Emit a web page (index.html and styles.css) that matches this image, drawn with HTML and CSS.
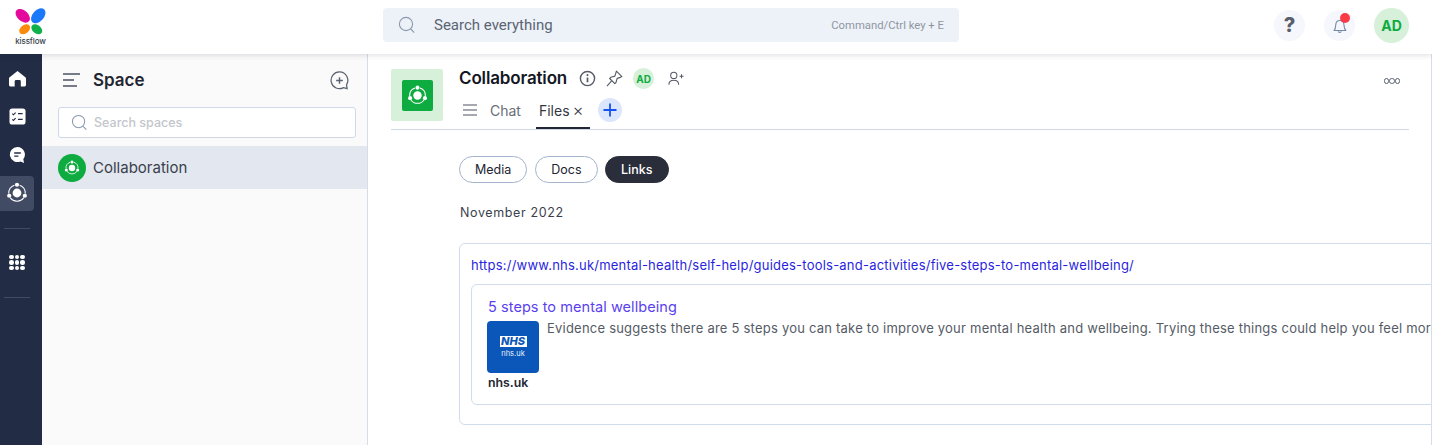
FILE: index.html
```html
<!DOCTYPE html>
<html lang="en">
<head>
<meta charset="utf-8">
<title>Kissflow - Collaboration</title>
<link rel="stylesheet" href="styles.css">
</head>
<body>
<svg class="defs" width="0" height="0" aria-hidden="true">
  <symbol id="spaces" viewBox="0 0 24 24">
    <circle cx="12" cy="12" r="4.800" fill="currentColor"/>
    <path d="M14.800 3.450A9 9 0 0 1 20.970 12.700M9.200 3.450A9 9 0 0 0 3.030 12.700M19.400 17.080A9 9 0 0 1 4.600 17.080" fill="none" stroke="currentColor" stroke-width="1.200"/>
    <circle cx="12" cy="3" r="2.300" fill="currentColor"/>
    <circle cx="3.500" cy="15" r="2.300" fill="currentColor"/>
    <circle cx="20.500" cy="15" r="2.300" fill="currentColor"/>
  </symbol>
</svg>
<div class="app">
  <header class="topbar">
    <div class="brand">
      <div class="logo">
        <svg class="logo-mark" viewBox="0 0 32 28" width="31" height="28">
          <ellipse cx="8" cy="7.600" rx="8.600" ry="5.600" transform="rotate(42 8 7.600)" fill="#e5089c"/>
          <ellipse cx="24" cy="7.600" rx="9" ry="5.800" transform="rotate(-48 24 7.600)" fill="#1a78fa"/>
          <ellipse cx="10" cy="21.500" rx="6.200" ry="4.400" transform="rotate(-38 10 21.500)" fill="#fb8b0c"/>
          <ellipse cx="22.500" cy="21.500" rx="6.200" ry="4.400" transform="rotate(38 22.500 21.500)" fill="#10b04a"/>
        </svg>
        <span class="logo-text">kissflow</span>
      </div>
    </div>
    <div class="global-search">
      <svg class="i-search" viewBox="0 0 18 18" width="18" height="18"><circle cx="8" cy="8" r="6.600" fill="none" stroke="#8b99ae" stroke-width="1.100"/><path d="M12.800 13l3.400 3.600" stroke="#8b99ae" stroke-width="1.100"/></svg>
      <span class="gs-text">Search everything</span>
      <span class="gs-hint">Command/Ctrl key + E</span>
    </div>
    <div class="actions">
      <span class="round help">?</span>
      <span class="round bell">
        <svg viewBox="0 0 20 22" width="18" height="21"><path d="M3.500 16.500c1.400-1.600 1.600-3 1.700-5.500C5.300 7.600 7 5.500 9.800 5.500s4.600 2.100 4.700 5.500c.1 2.500.5 3.900 2 5.500zM8 17.500c.3 1.500 3.100 1.500 3.500 0" fill="none" stroke="#7488a8" stroke-width="1.200" stroke-linejoin="round"/></svg>
        <i class="dot"></i>
      </span>
      <span class="avatar avatar-lg">AD</span>
    </div>
  </header>
  <div class="body">
    <nav class="rail">
      <span class="rail-item">
        <svg viewBox="0 0 18 18" width="17" height="17"><path fill-rule="evenodd" d="M9 1l8.300 6.800c.4.300.7.800.7 1.300V16a1.500 1.500 0 0 1-1.500 1.500h-4V12a1.500 1.500 0 0 0-1.500-1.500H7.500A1.500 1.500 0 0 0 6 12v5.500H1.500A1.500 1.500 0 0 1 0 16V9.100c0-.5.300-1 .7-1.300z" fill="#fff"/></svg>
      </span>
      <span class="rail-item">
        <svg viewBox="0 0 18 18" width="17" height="17"><rect width="17" height="17" x=".5" y=".5" rx="3" fill="#fff"/><path d="M3.500 6l1.200 1.200L7 4.800M3.500 12l1.200 1.200L7 10.800M9.500 6h5M9.500 12h5" fill="none" stroke="#222c44" stroke-width="1.200"/></svg>
      </span>
      <span class="rail-item">
        <svg viewBox="0 0 18 18" width="17" height="18"><path d="M9 .5a8 8 0 1 0 3.200 15.300L16 17.500l-.9-4.100A8 8 0 0 0 9 .5z" fill="#fff"/><path d="M5.500 6.800h7M5.500 10.200h4.500" stroke="#222c44" stroke-width="1.500"/></svg>
      </span>
      <span class="rail-item active">
        <svg class="spaces-icon" width="22" height="22"><use href="#spaces"/></svg>
      </span>
      <hr class="rail-rule rule-top">
      <span class="rail-grid">
        <i></i><i></i><i></i><i></i><i></i><i></i><i></i><i></i><i></i>
      </span>
      <hr class="rail-rule rule-bottom">
    </nav>
    <aside class="sidebar">
      <div class="side-head">
        <svg viewBox="0 0 18 14" width="18" height="14"><path d="M0 1h17M0 7h11M0 13h14" stroke="#4b5262" stroke-width="1.500"/></svg>
        <h2 class="side-title">Space</h2>
        <svg class="side-add" viewBox="0 0 20 20" width="19" height="19"><path d="M10 1a8.800 8.800 0 1 0 4.200 16.500l3.800 1-.6-4A8.800 8.800 0 0 0 10 1z" fill="none" stroke="#5a6270" stroke-width="1.300"/><path d="M10 6.500v7M6.500 10h7" stroke="#5a6270" stroke-width="1.500"/></svg>
      </div>
      <div class="side-search">
        <svg viewBox="0 0 18 18" width="17" height="17"><circle cx="8" cy="8" r="6.500" fill="none" stroke="#8b99ae" stroke-width="1.100"/><path d="M12.800 13l3.400 3.600" stroke="#8b99ae" stroke-width="1.100"/></svg>
        <span>Search spaces</span>
      </div>
      <div class="side-row">
        <span class="side-row-icon"><svg class="spaces-icon" width="16" height="16"><use href="#spaces"/></svg></span>
        <span class="side-row-text">Collaboration</span>
      </div>
    </aside>
    <main class="main">
      <section class="space-head">
        <span class="tile"><span class="tile-inner"><svg class="spaces-icon" width="21" height="21"><use href="#spaces"/></svg></span></span>
        <div class="head-col">
          <div class="title-row">
            <h1 class="title">Collaboration</h1>
            <svg class="t-info" viewBox="0 0 18 18" width="17" height="17"><circle cx="9" cy="9" r="7.500" fill="none" stroke="#555b66" stroke-width="1.500"/><path d="M9 8v5" stroke="#555b66" stroke-width="1.800"/><circle cx="9" cy="5.400" r="1.100" fill="#555b66"/></svg>
            <svg class="t-pin" viewBox="0 0 18 18" width="17" height="17"><path d="M11 1.200l5.800 5.800-1.500.8-3.500 1.100-1.200 4.300-1.300 1.200-5.400-5.400 1.200-1.300 4.300-1.200 1.100-3.500zM5.700 11.800L1 17" fill="none" stroke="#555b66" stroke-width="1.200" stroke-linejoin="round"/></svg>
            <span class="avatar avatar-sm">AD</span>
            <svg class="t-user" viewBox="0 0 18 16" width="16" height="15"><circle cx="6.500" cy="4.500" r="3.500" fill="none" stroke="#555b66" stroke-width="1.200"/><path d="M1 15c0-3.200 2.400-5 5.500-5s5.500 1.800 5.500 5M13 5.500h4.500M15.200 3.300v4.400" fill="none" stroke="#555b66" stroke-width="1.200"/></svg>
            <span class="more"><i></i><i></i><i></i></span>
          </div>
          <div class="tabs-row">
            <svg class="t-menu" viewBox="0 0 14 12" width="14" height="12"><path d="M0 1h14M0 6h14M0 11h14" stroke="#888c94" stroke-width="1.300"/></svg>
            <span class="tab">Chat</span>
            <span class="tab tab-active">Files<span class="tab-x">×</span></span>
            <span class="tab-add"><svg viewBox="0 0 14 14" width="14" height="14"><path d="M7 .5v13M.5 7h13" stroke="#1553f0" stroke-width="1.800"/></svg></span>
          </div>
        </div>
      </section>
      <section class="content">
        <div class="pills">
          <span class="pill">Media</span>
          <span class="pill">Docs</span>
          <span class="pill pill-on">Links</span>
        </div>
        <p class="month">November 2022</p>
        <article class="link-card">
          <a class="url" href="#">https://www.nhs.uk/mental-health/self-help/guides-tools-and-activities/five-steps-to-mental-wellbeing/</a>
          <div class="preview">
            <div class="preview-title">5 steps to mental wellbeing</div>
            <div class="preview-body">
              <div class="thumb-col">
                <div class="thumb"><span class="nhs-mark">NHS</span><span class="nhs-site">nhs.uk</span></div>
                <div class="site">nhs.uk</div>
              </div>
              <p class="desc">Evidence suggests there are 5 steps you can take to improve your mental health and wellbeing. Trying these things could help you feel more</p>
            </div>
          </div>
        </article>
      </section>
    </main>
  </div>
</div>
</body>
</html>
```
FILE: styles.css
```css
* { box-sizing: border-box; }
html, body { margin: 0; height: 100%; overflow: hidden; }
body { font-family: Inter, "Liberation Sans", sans-serif; color: #222632; background: #fff; }
.defs { position: absolute; }
.app { height: 445px; display: flex; flex-direction: column; }

.topbar { height: 54px; flex: none; display: flex; align-items: center; padding-bottom: 4px; background: #fff; box-shadow: 0 1px 6px rgba(30, 40, 60, .16); position: relative; z-index: 2; }
.brand { width: 383px; flex: none; padding-left: 15px; }
.logo { width: 31px; display: flex; flex-direction: column; align-items: center; padding-top: 4px; }
.logo-mark { display: block; }
.logo-text { font-size: 8px; line-height: 10px; color: #3a3f4a; font-weight: 500; letter-spacing: -.1px; }
.global-search { width: 576px; height: 34px; flex: none; display: flex; align-items: center; background: #edf2f9; border-radius: 4px; padding: 0 15px; }
.gs-text { font-family: Roboto, sans-serif; font-size: 15px; color: #5b6472; margin-left: 18px; flex: 1; }
.gs-hint { font-family: Roboto, sans-serif; font-size: 11.300px; color: #8f96a2; }
.actions { flex: 1; display: flex; align-items: center; padding-left: 315px; }
.round { width: 31px; height: 31px; border-radius: 50%; background: #f5f7fc; display: flex; align-items: center; justify-content: center; position: relative; }
.help { font-size: 20px; font-weight: 800; color: #5a5f6b; }
.bell { margin-left: 19px; }
.dot { position: absolute; width: 10px; height: 10px; border-radius: 50%; background: #fb3a48; top: 3px; right: 5px; }
.avatar { border-radius: 50%; background: #d6f0d9; color: #0dab40; font-weight: 700; display: flex; align-items: center; justify-content: center; flex: none; }
.avatar-lg { width: 35px; height: 35px; font-size: 14px; margin-left: 19px; }
.avatar-sm { width: 21px; height: 21px; font-size: 10px; margin-left: 10px; }

.body { flex: 1; display: flex; min-height: 0; }
.rail { width: 42px; flex: none; background: #222c44; display: flex; flex-direction: column; align-items: flex-start; padding-top: 7px; }
.rail-item { width: 34px; height: 35px; margin-bottom: 3.330px; display: flex; align-items: center; justify-content: center; color: #fff; border-radius: 0 4px 4px 0; }
.rail-item.active { background: #414b63; margin-bottom: 0; }
.rail-rule { width: 26px; height: 1px; border: 0; background: #414b63; margin: 0 0 0 4px; flex: none; }
.rule-top { margin-top: 17px; }
.rail-grid { display: grid; grid-template-columns: repeat(3, 4.500px); grid-auto-rows: 4.500px; gap: 1px; margin: 26px 0 0 9px; }
.rail-grid i { width: 4.500px; height: 4.500px; background: #fff; border-radius: 50%; }
.rule-bottom { margin-top: 27px; }

.sidebar { width: 326px; flex: none; background: #fafafa; border-right: 1px solid #d5dde9; padding-top: 14px; }
.side-head { display: flex; align-items: center; height: 24px; padding: 0 18px 0 21px; }
.side-title { margin: 0 0 0 12px; font-size: 17px; font-weight: 600; line-height: 22px; color: #222632; flex: 1; }
.side-search { margin: 15px 11px 0 16px; height: 31px; background: #fff; border: 1px solid #cfd8e8; border-radius: 3px; display: flex; align-items: center; padding-left: 12px; gap: 6px; font-size: 12.500px; font-weight: 500; color: #c3c6cc; }
.side-row { margin-top: 8px; height: 43px; background: #e3e7ef; display: flex; align-items: center; padding-left: 16px; }
.side-row-icon { width: 28px; height: 28px; border-radius: 50%; background: #0dab40; display: flex; align-items: center; justify-content: center; }
.spaces-icon { display: block; color: #fff; }
.side-row-text { margin-left: 7px; font-size: 15px; color: #3a3f4c; }

.main { flex: 1; min-width: 0; overflow: hidden; background: #fff; border-right: 1px solid #d5dde9; padding: 15px 22px 0 23px; }
.space-head { display: flex; align-items: flex-start; border-bottom: 1px solid #cfd8e8; height: 61px; }
.tile { width: 52px; height: 52px; flex: none; background: #d6f0d9; border-radius: 2px; display: flex; align-items: center; justify-content: center; }
.tile-inner { width: 31px; height: 31px; background: #0dab40; border-radius: 2px; display: flex; align-items: center; justify-content: center; }
.head-col { flex: 1; margin-left: 16px; }
.title-row { display: flex; align-items: center; height: 21px; margin-top: -1px; }
.title { margin: 0; font-size: 17px; font-weight: 600; line-height: 20px; color: #14171f; position: relative; top: -1px; letter-spacing: -.15px; }
.t-info { margin-left: 12px; }
.t-pin { margin-left: 10px; }
.t-user { margin-left: 14px; }
.more { margin-left: auto; margin-right: 9px; display: flex; margin-top: 5px; }
.more i { width: 5.500px; height: 5.500px; border: 1.200px solid #5a6270; border-radius: 50%; }
.tabs-row { display: flex; align-items: center; height: 41px; padding-left: 4px; }
.tab { font-size: 14px; color: #686d78; margin-left: 13px; height: 39px; display: flex; align-items: center; padding-top: 1px; }
.tab-active { color: #33373f; margin-left: 15px; padding: 3px 3px 0; border-bottom: 2px solid #222632; height: 39px; gap: 3px; width: 54px; flex: none; }
.tab-x { font-size: 17px; line-height: 14px; color: #3a3f4c; font-weight: 300; }
.tab-add { width: 24px; height: 24px; border-radius: 50%; background: #dbe6fd; margin-left: 8px; display: flex; align-items: center; justify-content: center; }

.content { padding-left: 68px; }
.pills { display: flex; gap: 8px; margin-top: 26px; }
.pill { height: 27px; padding: 0 15px; border: 1px solid #a4b4cc; border-radius: 14px; font-size: 12.500px; color: #222632; display: flex; align-items: center; }
.pill-on { background: #2a2d3a; border-color: #2a2d3a; color: #fff; font-weight: 500; padding: 0 15.500px; margin-left: -1px; }
.month { margin: 21px 0 0 1px; font-size: 12.500px; line-height: 16px; color: #3a3f4c; letter-spacing: .62px; position: relative; top: 1px; }
.link-card { margin-top: 23px; width: 1100px; height: 182px; border: 1px solid #d0dcec; border-radius: 6px; padding: 12px 11px; }
.url { display: block; font-size: 13px; line-height: 18px; color: #2a1fe0; text-decoration: none; white-space: nowrap; letter-spacing: .22px; }
.preview { margin-top: 10px; height: 121px; border: 1px solid #d0dcec; border-radius: 6px; padding: 12px 15px; }
.preview-title { font-size: 14.500px; line-height: 20px; color: #5a3ff0; margin-left: 1px; letter-spacing: .06px; }
.preview-body { display: flex; margin-top: 4px; }
.thumb-col { width: 52px; flex: none; }
.thumb { width: 52px; height: 52px; background: #0b57b9; border-radius: 4px; display: flex; flex-direction: column; align-items: center; justify-content: center; gap: 3px; }
.nhs-mark { background: #fff; color: #0b57b9; font-size: 11px; line-height: 11px; font-weight: 800; font-style: italic; width: 27px; text-align: center; }
.nhs-site { color: #e8f0fb; font-size: 7.500px; line-height: 8px; }
.site { font-size: 12.300px; font-weight: 600; line-height: 18px; color: #222632; margin: 1px 0 0 1px; }
.desc { margin: 0 0 0 8px; font-size: 13px; line-height: 14px; color: #555b66; white-space: nowrap; letter-spacing: .22px; }
```
